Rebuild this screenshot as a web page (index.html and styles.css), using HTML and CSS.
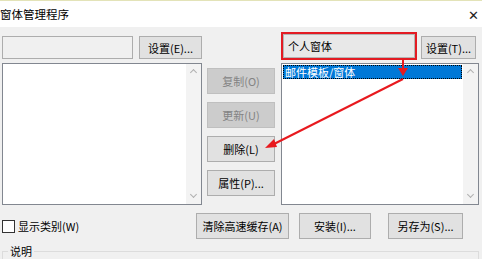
FILE: index.html
```html
<!DOCTYPE html>
<html lang="zh-CN">
<head>
    <meta charset="UTF-8">
    <title>窗体管理程序</title>
    <link rel="stylesheet" href="styles.css">
</head>
<body>
    <div id="window">
        <div class="titlebar">
            <span class="title">窗体管理程序</span>
            <span class="close">✕</span>
        </div>

        <div class="content">
            <div class="main-grid">
                <div class="top-left">
                    <div class="textbox"></div>
                    <button class="btn setup-left">设置(E)...</button>
                </div>
                <div class="top-right">
                    <div class="combo marked">个人窗体</div>
                    <button class="btn setup-right">设置(T)...</button>
                </div>

                <div class="listbox left-list">
                    <div class="items"></div>
                    <div class="scrollbar"><span class="up"></span><span class="down"></span></div>
                </div>
                <div class="actions">
                    <button class="btn" disabled>复制(O)</button>
                    <button class="btn" disabled>更新(U)</button>
                    <button class="btn">删除(L)</button>
                    <button class="btn">属性(P)...</button>
                </div>
                <div class="listbox right-list">
                    <div class="items">
                        <div class="item selected">邮件模板/窗体</div>
                    </div>
                    <div class="scrollbar"><span class="up"></span><span class="down"></span></div>
                </div>
            </div>

            <div class="bottom-row">
                <label class="check"><span class="box"></span>显示类别(W)</label>
                <button class="btn clear-btn">清除高速缓存(A)</button>
                <button class="btn install-btn">安装(I)...</button>
                <button class="btn save-btn">另存为(S)...</button>
            </div>

            <fieldset class="desc">
                <legend>说明</legend>
            </fieldset>
        </div>

        <!-- annotation arrows -->
        <svg class="arrows" width="482" height="259" viewBox="0 0 482 259">
            <line x1="403" y1="59" x2="403" y2="70" stroke="#e8191e" stroke-width="2"/>
            <polygon points="398,68 408,68 403,76" fill="#e8191e"/>
            <line x1="403" y1="79" x2="272" y2="145" stroke="#e8191e" stroke-width="2"/>
            <polygon points="265,148 274,139 277,147" fill="#e8191e"/>
        </svg>
    </div>
</body>
</html>
```

FILE: styles.css
```css
/* form manager dialog */
body {
    margin: 0;
    padding: 0;
    font-family: "Noto Sans CJK SC", "Liberation Sans", sans-serif;
    font-size: 11px;
    color: #000;
    background: #f0f0f0;
}
#window {
    position: relative;
    width: 482px;
    height: 259px;
    overflow: hidden;
    background: #f0f0f0;
}
.titlebar {
    height: 26px;
    background: #fff;
    border-top: 1px solid #e3e3b8;
    display: flex;
    align-items: center;
    justify-content: space-between;
}
.title {
    font-size: 11.5px;
}
.close {
    font-size: 13px;
    color: #222;
    padding-right: 3px;
}
.content {
    padding: 9px 3px 0 2px;
}
.main-grid {
    display: grid;
    grid-template-columns: 200px 5px 68px 6px 198px;
    grid-template-rows: 24px 142px;
    row-gap: 3px;
}
.top-left, .top-right {
    display: flex;
    align-items: flex-start;
}
.top-left {
    grid-column: 1;
    grid-row: 1;
}
.top-right {
    grid-column: 5;
    grid-row: 1;
}
.left-list {
    grid-column: 1;
    grid-row: 2;
}
.right-list {
    grid-column: 5;
    grid-row: 2;
}
.textbox {
    width: 129px;
    height: 21px;
    background: #f0f0f0;
    border: 1px solid #adadad;
}
.btn {
    font-family: inherit;
    font-size: 11px;
    color: #000;
    background: #e1e1e1;
    border: 1px solid #adadad;
    padding: 0;
    height: 23px;
}
.btn:disabled {
    background: #cccccc;
    border-color: #bfbfbf;
    color: #838383;
}
.setup-left {
    width: 63px;
    margin-left: 6px;
}
.combo {
    width: 126px;
    height: 22px;
    margin-left: 2px;
    margin-top: -2px;
    padding-left: 4px;
    line-height: 22px;
    background: #e8e8e8;
    border: 1px solid #b4b4b4;
    white-space: nowrap;
}
.marked {
    outline: 2px solid #e31b23;
}
.setup-right {
    width: 55px;
    margin-left: 6px;
    white-space: nowrap;
}
.listbox {
    display: flex;
    background: #fff;
    border: 1px solid #828790;
}
.items {
    flex: 1;
    padding: 1px;
}
.item {
    height: 14px;
    line-height: 14px;
    padding-left: 2px;
    white-space: nowrap;
}
.item.selected {
    background: #0078d7;
    color: #fff;
    outline: 1px dotted #000;
    outline-offset: -1px;
}
.scrollbar {
    width: 15px;
    background: #f3f3f3;
    position: relative;
}
.scrollbar .up, .scrollbar .down {
    position: absolute;
    left: 5px;
    width: 4px;
    height: 4px;
    border-left: 1px solid #b0b0b0;
    border-top: 1px solid #b0b0b0;
}
.scrollbar .up {
    top: 6px;
    transform: rotate(45deg);
}
.scrollbar .down {
    bottom: 7px;
    transform: rotate(225deg);
}
.actions {
    grid-column: 3;
    grid-row: 2;
    display: flex;
    flex-direction: column;
    gap: 8px;
    padding-top: 5px;
}
.actions .btn {
    width: 68px;
    height: 26px;
}
.bottom-row {
    display: flex;
    align-items: center;
    height: 26px;
    margin-top: 8px;
}
.check {
    display: flex;
    align-items: center;
    width: 194px;
    color: #000;
}
.check .box {
    width: 11px;
    height: 11px;
    border: 1px solid #333;
    background: #fff;
    margin-right: 3px;
}
.bottom-row .btn {
    height: 26px;
}
.clear-btn {
    width: 93px;
}
.install-btn {
    width: 72px;
    margin-left: 10px;
}
.save-btn {
    width: 75px;
    margin-left: 17px;
}
.desc {
    margin: 6px 0 0 0;
    padding: 0;
    height: 20px;
    border: 1px solid #dcdcdc;
    border-bottom: none;
}
.desc legend {
    padding: 0 2px;
    margin-left: 5px;
    font-size: 11px;
    line-height: 12px;
}
.arrows {
    position: absolute;
    left: 0;
    top: 0;
}
```
